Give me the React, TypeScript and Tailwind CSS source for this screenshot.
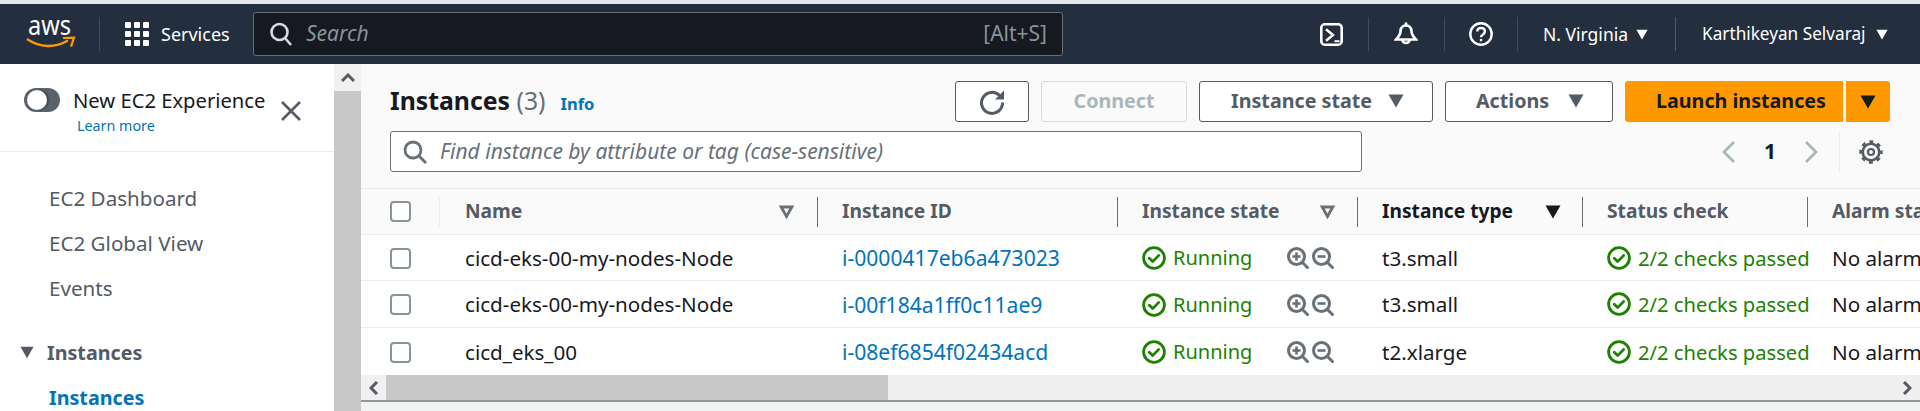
import React from "react";

const F = "font-['Noto_Sans','Open_Sans',sans-serif]";

function Tri({ className = "", w = 16, h = 14, fill = "#545b64" }: { className?: string; w?: number; h?: number; fill?: string }) {
  return (
    <svg width={w} height={h} viewBox="0 0 16 14" className={`shrink-0 ${className}`}>
      <path d="M0.5 0.5h15L8 13.5z" fill={fill} />
    </svg>
  );
}

function TriOutline() {
  return (
    <svg width="15" height="14" viewBox="0 0 15 14" className="shrink-0">
      <path d="M2.2 2h10.6L7.5 11.5z" fill="none" stroke="#687078" strokeWidth="2.8" />
    </svg>
  );
}

function Check() {
  return (
    <svg width="24" height="24" viewBox="0 0 24 24" fill="none" stroke="#1d8102" strokeWidth="2.8" className="shrink-0">
      <circle cx="12" cy="12" r="10.4" />
      <path d="M7.3 12.2l3.4 3.4 6-6.2" strokeLinecap="round" strokeLinejoin="round" />
    </svg>
  );
}

function ZoomIcon({ plus }: { plus?: boolean }) {
  return (
    <svg width="22" height="22" viewBox="0 0 22 22" fill="none" stroke="#687078" strokeWidth="3" className="shrink-0">
      <circle cx="9.5" cy="9.5" r="8" />
      <path d="M15 15l6.5 6.5" />
      <path d="M5.5 9.5h8" strokeWidth="2.6" />
      {plus && <path d="M9.5 5.5v8" strokeWidth="2.6" />}
    </svg>
  );
}

function Box() {
  return <div className="w-[21px] h-[21px] rounded-[4px] border-2 border-[#879596] bg-white" />;
}

const rows = [
  ["cicd-eks-00-my-nodes-Node", "i-0000417eb6a473023", "t3.small"],
  ["cicd-eks-00-my-nodes-Node", "i-00f184a1ff0c11ae9", "t3.small"],
  ["cicd_eks_00", "i-08ef6854f02434acd", "t2.xlarge"],
];

function Row({ r, h, last }: { r: string[]; h: string; last?: boolean }) {
  return (
    <div className={`flex items-center bg-white pt-[1px] text-[20.6px] text-[#16191f] ${last ? "" : "border-b border-[#eaeded]"} ${h}`}>
      <div className="w-[104px] pl-[29px] shrink-0"><Box /></div>
      <div className="w-[377px] shrink-0 whitespace-nowrap">{r[0]}</div>
      <div className="w-[300px] shrink-0 text-[21.1px] text-[#0073bb] whitespace-nowrap">{r[1]}</div>
      <div className="w-[240px] shrink-0 flex items-center">
        <div className="w-[145px] flex items-center gap-[7px] text-[20px] text-[#1d8102]"><Check />Running</div>
        <div className="flex items-center gap-[3px]"><ZoomIcon plus /><ZoomIcon /></div>
      </div>
      <div className="w-[225px] shrink-0">{r[2]}</div>
      <div className="w-[225px] shrink-0 flex items-center gap-[7px] text-[20.2px] text-[#1d8102] whitespace-nowrap"><Check />2/2 checks passed</div>
      <div className="whitespace-nowrap">No alarms</div>
    </div>
  );
}

function Th({ label, w, children, dark, pr = "pr-[22px]" }: { label: string; w: string; children?: React.ReactNode; dark?: boolean; pr?: string }) {
  return (
    <div className={`${w} ${pr} shrink-0 flex items-center justify-between h-[30px] border-r border-[#687078]`}>
      <span className={`text-[19.2px] font-bold whitespace-nowrap ${dark ? "text-[#16191f]" : "text-[#545b64]"}`}>{label}</span>
      {children}
    </div>
  );
}

const Sep = ({ cls }: { cls: string }) => <div className={`w-px h-[34px] shrink-0 bg-[#414d5c] ${cls}`} />;

export default function App() {
  return (
    <div className={`${F} w-[1920px] h-[411px] overflow-hidden bg-white flex flex-col`}>
      <div className="h-[4px] bg-[#e4e7e9] shrink-0" />
      <header className="h-[60px] shrink-0 bg-[#232f3e] flex items-center text-white">
        <div className="w-[100px] h-[34px] pl-[26px] border-r border-[#414d5c] shrink-0 flex items-center">
          <svg width="48" height="32" viewBox="0 0 48 32" className="overflow-visible">
            <text x="2" y="17" fontSize="27" fill="#fff" fontFamily="Noto Sans" textLength="43" lengthAdjust="spacingAndGlyphs">aws</text>
            <path d="M1 21c13 9 28 9 41 1.5" fill="none" stroke="#ff9900" strokeWidth="2.4" />
            <path d="M37 20l11-.4-3 9" fill="none" stroke="#ff9900" strokeWidth="2.2" />
          </svg>
        </div>
        <div className="ml-[25px] grid grid-cols-3 gap-[3px] w-[24px] shrink-0">
          {Array.from({ length: 9 }).map((_, i) => (
            <div key={i} className="w-[6px] h-[6px] bg-white rounded-[1px]" />
          ))}
        </div>
        <span className="ml-[12px] text-[18px] w-[92px] shrink-0">Services</span>
        <div className="w-[810px] h-[44px] shrink-0 rounded-[3px] border border-[#687078] bg-[#16191f] flex items-center pl-[16px] pr-[15px]">
          <svg width="22" height="24" viewBox="0 0 22 24" fill="none" stroke="#d5dbdb" strokeWidth="2.6">
            <circle cx="9.5" cy="10" r="8" />
            <path d="M15 16l6 7" />
          </svg>
          <span className="ml-[14px] italic text-[21px] text-[#879596] flex-1">Search</span>
          <span className="text-[21px] text-[#879596]">[Alt+S]</span>
        </div>
        <svg width="23" height="23" viewBox="0 0 23 23" fill="none" stroke="#fff" strokeWidth="2.6" className="ml-[257px] shrink-0">
          <rect x="1.3" y="1.3" width="20.4" height="20.4" rx="3.5" />
          <path d="M6 6.3l7 5.7-7 5.7" strokeWidth="2.4" />
          <path d="M14.5 18.2h5" strokeWidth="2" />
        </svg>
        <Sep cls="ml-[25px]" />
        <svg width="24" height="24" viewBox="0 0 24 24" fill="none" stroke="#fff" strokeWidth="2.6" className="ml-[25px] shrink-0">
          <path d="M12 3.5c-3.5 0-5.5 2.5-5.5 6 0 3.5-2 5-4.5 8h20c-2.5-3-4.5-4.5-4.5-8 0-3.5-2-6-5.5-6z" />
          <path d="M12 0.5v3" />
          <path d="M8.3 18a3.8 3.8 0 0 0 7.4 0" />
        </svg>
        <Sep cls="ml-[26px]" />
        <svg width="24" height="24" viewBox="0 0 24 24" fill="none" stroke="#fff" strokeWidth="2.4" className="ml-[24px] shrink-0">
          <circle cx="12" cy="12" r="10.7" />
          <path d="M8.3 9.6c0-4.8 7.6-4.8 7.6 0 0 2.9-3.9 2.9-3.9 5.6" />
          <path d="M12 17v2.2" />
        </svg>
        <Sep cls="ml-[24px]" />
        <span className="ml-[25px] text-[17.5px] whitespace-nowrap">N. Virginia</span>
        <Tri fill="#fff" w={12} h={11} className="ml-[8px]" />
        <Sep cls="ml-[27px] bg-[#545b64]" />
        <span className="ml-[26px] text-[17.2px] whitespace-nowrap">Karthikeyan Selvaraj</span>
        <Tri fill="#fff" w={12} h={11} className="ml-[11px]" />
      </header>
      <div className="flex flex-1 min-h-0">
        <aside className="w-[334px] shrink-0 bg-white">
          <div className="h-[88px] border-b border-[#eaeded] relative">
            <div className="absolute left-[24px] top-[24px] w-[36px] h-[24px] rounded-full bg-[#5b626b]">
              <div className="w-[20px] h-[20px] rounded-full bg-white mt-[2px] ml-[3px] shadow-[2px_0_2px_#3f454c]" />
            </div>
            <div className="absolute left-[73px] top-[21px] text-[20.2px] text-[#16191f] whitespace-nowrap">New EC2 Experience</div>
            <div className="absolute left-[77px] top-[51px] text-[14.3px] text-[#0073bb]">Learn more</div>
            <svg width="22" height="22" viewBox="0 0 22 22" className="absolute left-[280px] top-[36px]" stroke="#545b64" strokeWidth="2.6">
              <path d="M2 2l18 18M20 2L2 20" />
            </svg>
          </div>
          <nav className="pl-[49px] text-[20.6px] text-[#545b64]">
            <div className="mt-[24px] h-[45px] flex items-center">EC2 Dashboard</div>
            <div className="h-[45px] flex items-center">EC2 Global View</div>
            <div className="h-[45px] flex items-center">Events</div>
            <div className="mt-[19px] -ml-[29px] h-[45px] flex items-center gap-[13px] font-bold text-[19.7px]">
              <Tri w={14} h={13} />Instances
            </div>
            <div className="h-[45px] flex items-center font-bold text-[19.7px] text-[#0073bb]">Instances</div>
          </nav>
        </aside>
        <div className="w-[27px] shrink-0 bg-[#c8c8c8] flex flex-col">
          <div className="h-[27px] bg-[#f1f1f1] flex items-center justify-center">
            <svg width="14" height="10" viewBox="0 0 14 10" fill="none" stroke="#545b64" strokeWidth="3"><path d="M1 8l6-6 6 6" /></svg>
          </div>
        </div>
        <main className="flex-1 min-w-0 bg-[#fafafa] flex flex-col">
          <div className="pl-[29px] pr-[30px] pt-[17px] flex items-center h-[58px]">
            <h1 className="text-[24.8px] font-bold text-[#16191f] whitespace-nowrap -mt-[2px]">Instances <span className="font-normal text-[#687078]">(3)</span></h1>
            <span className="ml-[15px] mt-[5px] text-[16.5px] font-bold text-[#0073bb]">Info</span>
            <div className="flex-1" />
            <button className="w-[74px] h-[41px] bg-white border border-[#545b64] rounded-[3px] flex items-center justify-center">
              <svg width="26" height="26" viewBox="0 0 26 26" fill="none" stroke="#545b64" strokeWidth="3">
                <path d="M20.5 6.5a10.5 10.5 0 1 0 3 7" />
                <path d="M25 1.5v9h-9z" fill="#545b64" stroke="none" />
              </svg>
            </button>
            <button className="ml-[12px] w-[146px] h-[41px] pb-[2px] bg-[#fafafa] border border-[#d5dbdb] rounded-[3px] text-[19.7px] font-bold text-[#aab7b8]">Connect</button>
            <button className="ml-[12px] w-[234px] h-[41px] pb-[2px] bg-white border border-[#545b64] rounded-[3px] text-[19.7px] font-bold text-[#545b64] flex items-center justify-between pl-[31px] pr-[28px]">Instance state <Tri /></button>
            <button className="ml-[12px] w-[168px] h-[41px] pb-[2px] bg-white border border-[#545b64] rounded-[3px] text-[19.7px] font-bold text-[#545b64] flex items-center justify-between pl-[30px] pr-[28px]">Actions <Tri /></button>
            <div className="ml-[12px] flex">
              <button className="w-[218px] h-[41px] pb-[2px] bg-[#ff9900] rounded-l-[3px] text-[19.7px] font-bold text-[#16191f] text-left pl-[31px] whitespace-nowrap">Launch instances</button>
              <button className="ml-[3px] w-[44px] h-[41px] bg-[#ff9900] rounded-r-[3px] flex items-center justify-center"><Tri fill="#16191f" /></button>
            </div>
          </div>
          <div className="pl-[29px] pr-[37px] mt-[9px] flex items-center h-[41px]">
            <div className="w-[972px] h-[41px] bg-white border border-[#687078] rounded-[3px] flex items-center pl-[12px]">
              <svg width="24" height="24" viewBox="0 0 24 24" fill="none" stroke="#687078" strokeWidth="2.8">
                <circle cx="10" cy="10" r="8" /><path d="M16 16l7 7" />
              </svg>
              <span className="ml-[13px] italic text-[21px] text-[#687078] whitespace-nowrap">Find instance by attribute or tag (case-sensitive)</span>
            </div>
            <div className="flex-1" />
            <svg width="13" height="22" viewBox="0 0 13 22" fill="none" stroke="#aab7b8" strokeWidth="2.8"><path d="M12 1L2 11l10 10" /></svg>
            <span className="mx-[31px] w-[8px] text-[21px] font-bold text-[#16191f] flex justify-center">1</span>
            <svg width="13" height="22" viewBox="0 0 13 22" fill="none" stroke="#aab7b8" strokeWidth="2.8"><path d="M1 1l10 10L1 21" /></svg>
            <div className="w-px h-[40px] bg-[#eaeded] ml-[21px]" />
            <svg width="24" height="24" viewBox="0 0 24 24" fill="none" stroke="#545b64" className="ml-[19px]">
              <circle cx="12" cy="12" r="8.3" strokeWidth="2.6" />
              <circle cx="12" cy="12" r="10.4" strokeWidth="2.6" strokeDasharray="4 4.17" strokeDashoffset="2" />
              <circle cx="12" cy="12" r="3" strokeWidth="2.2" />
            </svg>
          </div>
          <div className="mt-[16px] h-[47px] border-y border-[#eaeded] flex items-center shrink-0">
            <div className="w-[79px] shrink-0 pl-[29px] h-[30px] border-r border-[#eaeded] flex items-center"><Box /></div>
            <div className="w-[25px] shrink-0" />
            <Th label="Name" w="w-[353px]" pr="pr-[23px]"><TriOutline /></Th>
            <div className="w-[24px] shrink-0" />
            <Th label="Instance ID" w="w-[276px]" />
            <div className="w-[24px] shrink-0" />
            <Th label="Instance state" w="w-[216px]" pr="pr-[22px]"><TriOutline /></Th>
            <div className="w-[24px] shrink-0" />
            <Th label="Instance type" w="w-[201px]" dark pr="pr-[21px]"><Tri fill="#16191f" /></Th>
            <div className="w-[24px] shrink-0" />
            <Th label="Status check" w="w-[201px]" />
            <div className="w-[24px] shrink-0" />
            <span className="text-[19.2px] font-bold text-[#545b64] whitespace-nowrap">Alarm status</span>
          </div>
          <Row r={rows[0]} h="h-[46px]" />
          <Row r={rows[1]} h="h-[47px]" />
          <Row r={rows[2]} h="h-[47px]" last />
          <div className="h-[27px] shrink-0 bg-[#efefef] flex border-b-2 border-[#8f979c]">
            <div className="w-[25px] bg-[#f1f1f1] flex items-center justify-center">
              <svg width="10" height="14" viewBox="0 0 10 14" fill="none" stroke="#545b64" strokeWidth="3"><path d="M8 1L2 7l6 6" /></svg>
            </div>
            <div className="w-[502px] bg-[#c8c8c8]" />
            <div className="flex-1" />
            <div className="w-[26px] flex items-center justify-center">
              <svg width="10" height="14" viewBox="0 0 10 14" fill="none" stroke="#545b64" strokeWidth="3"><path d="M2 1l6 6-6 6" /></svg>
            </div>
          </div>
          <div className="flex-1 bg-[#f2f3f3]" />
        </main>
      </div>
    </div>
  );
}
